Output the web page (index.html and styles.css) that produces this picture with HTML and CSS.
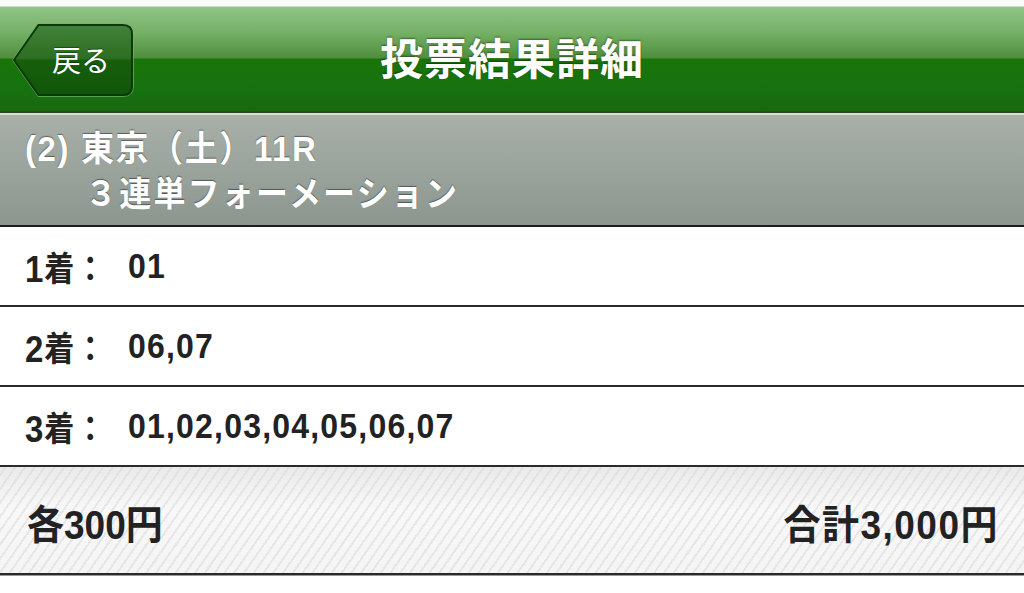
FILE: index.html
```html
<!DOCTYPE html>
<html lang="ja">
<head>
<meta charset="utf-8">
<title>投票結果詳細</title>
<link rel="stylesheet" href="styles.css">
</head>
<body>
<div class="strip"></div>
<header class="navbar">
  <a class="back" href="#">
    <svg class="back-shape" width="124" height="76" viewBox="0 0 124 76">
      <defs>
        <linearGradient id="bg" x1="0" y1="0" x2="0" y2="1">
          <stop offset="0" stop-color="#41813a"/>
          <stop offset="0.48" stop-color="#2d6e22"/>
          <stop offset="0.5" stop-color="#175f0b"/>
          <stop offset="1" stop-color="#0f560a"/>
        </linearGradient>
      </defs>
      <path d="M1.5 38 L27 1.5 H112 Q122.5 1.5 122.5 12 V64 Q122.5 74.5 112 74.5 H27 Z" fill="none" stroke="#7bb06e" stroke-width="1" opacity="0.7"/>
      <path d="M3 38 L27.5 3 H112 Q121 3 121 12 V64 Q121 73 112 73 H27.5 Z" fill="url(#bg)" stroke="#0c3a06" stroke-width="2"/>
    </svg>
    <span class="back-label">戻る</span>
  </a>
  <h1 class="title">投票結果詳細</h1>
</header>
<section class="race">
  <div class="race-line">(2) 東京（土）11R</div>
  <div class="race-line sub">３連単フォーメーション</div>
</section>
<div class="rows">
  <div class="row"><span class="label"><span class="num">1</span><span class="cj">着：</span></span><span class="value">01</span></div>
  <div class="row"><span class="label"><span class="num">2</span><span class="cj">着：</span></span><span class="value">06,07</span></div>
  <div class="row"><span class="label"><span class="num">3</span><span class="cj">着：</span></span><span class="value">01,02,03,04,05,06,07</span></div>
</div>
<footer class="summary">
  <span class="each">各300円</span>
  <span class="total">合計3,000円</span>
</footer>
</body>
</html>
```

FILE: styles.css
```css
html, body {
  margin: 0;
  padding: 0;
  background: #ffffff;
}
body {
  width: 1024px;
  height: 593px;
  overflow: hidden;
  font-family: "Liberation Sans", "Noto Sans CJK JP", sans-serif;
}
.strip {
  height: 6px;
  background: #fbfbfb;
}
.navbar {
  height: 104px;
  border-top: 1px solid #c9dcc4;
  border-bottom: 2px solid #2b4a24;
  box-shadow: 0 2px 0 #d9ddd8;
  background: linear-gradient(to bottom, #90c487 0%, #74b065 25%, #4f8e3d 49%, #1a7509 50%, #177110 80%, #1a6810 100%);
  position: relative;
  display: flex;
  align-items: center;
  justify-content: center;
}
.back {
  position: absolute;
  left: 11px;
  top: 15px;
  width: 124px;
  height: 76px;
  text-decoration: none;
}
.back-shape {
  position: absolute;
  left: 0;
  top: 0;
}
.back-label {
  position: absolute;
  left: 41px;
  top: 0;
  height: 76px;
  line-height: 74px;
  color: #ffffff;
  font-family: "Noto Sans CJK JP", sans-serif;
  font-weight: 400;
  font-size: 29px;
  text-shadow: 0 -1px 1px rgba(0,0,0,0.4);
}
.title {
  margin: 0;
  color: #ffffff;
  font-family: "Noto Sans CJK JP", sans-serif;
  font-weight: 700;
  font-size: 43px;
  letter-spacing: 1px;
  text-shadow: 0 -1px 2px rgba(0,0,0,0.45);
  transform: translateY(-3px);
}
.race {
  margin-top: 2px;
  height: 112px;
  box-sizing: border-box;
  padding: 12px 0 0 25px;
  background: linear-gradient(to bottom, #a8b0a8 0%, #9aa39c 50%, #8c968f 100%);
  border-bottom: 2px solid #1e1e1e;
}
.race-line {
  color: #ffffff;
  font-weight: 700;
  font-size: 33px;
  line-height: 44px;
  height: 44px;
  letter-spacing: 1.6px;
  text-shadow: 0 -1px 1px rgba(0,0,0,0.45);
  white-space: nowrap;
  transform: scaleY(1.08);
  transform-origin: left center;
}
.race-line.sub {
  padding-left: 60px;
  font-size: 32px;
  letter-spacing: 2.2px;
  margin-top: 1px;
}
.row {
  height: 80px;
  box-sizing: border-box;
  border-bottom: 2px solid #2a2a2a;
  display: flex;
  align-items: center;
  padding-left: 25px;
  color: #222222;
  font-weight: 700;
  font-size: 32px;
}
.label,
.value {
  display: inline-block;
  white-space: nowrap;
  transform: scaleY(1.12);
}
.label {
  width: 103px;
  letter-spacing: 1px;
}
.num {
  font-size: 33px;
}
.cj {
  vertical-align: 1px;
  font-size: 30px;
}
.value {
  letter-spacing: 1.2px;
}
.summary {
  height: 108px;
  box-sizing: border-box;
  border-bottom: 2px solid #2a2a2a;
  box-shadow: 0 1px 0 #999999;
  display: flex;
  align-items: center;
  justify-content: space-between;
  padding: 0 26px 0 27px;
  background-color: #f3f3f3;
  background-image:
    repeating-linear-gradient(-55deg, rgba(255,255,255,0) 0px, rgba(255,255,255,0) 6px, rgba(215,215,215,0.5) 6px, rgba(215,215,215,0.5) 8px),
    linear-gradient(to bottom, #eaeaea, #f8f8f8 40%, #f4f4f4);
  color: #222222;
  font-weight: 700;
  font-size: 37px;
}
.each, .total {
  display: inline-block;
  white-space: nowrap;
  transform: translateY(2px) scaleY(1.08);
}
.total {
  letter-spacing: 1.5px;
  margin-right: -1px;
}
```
